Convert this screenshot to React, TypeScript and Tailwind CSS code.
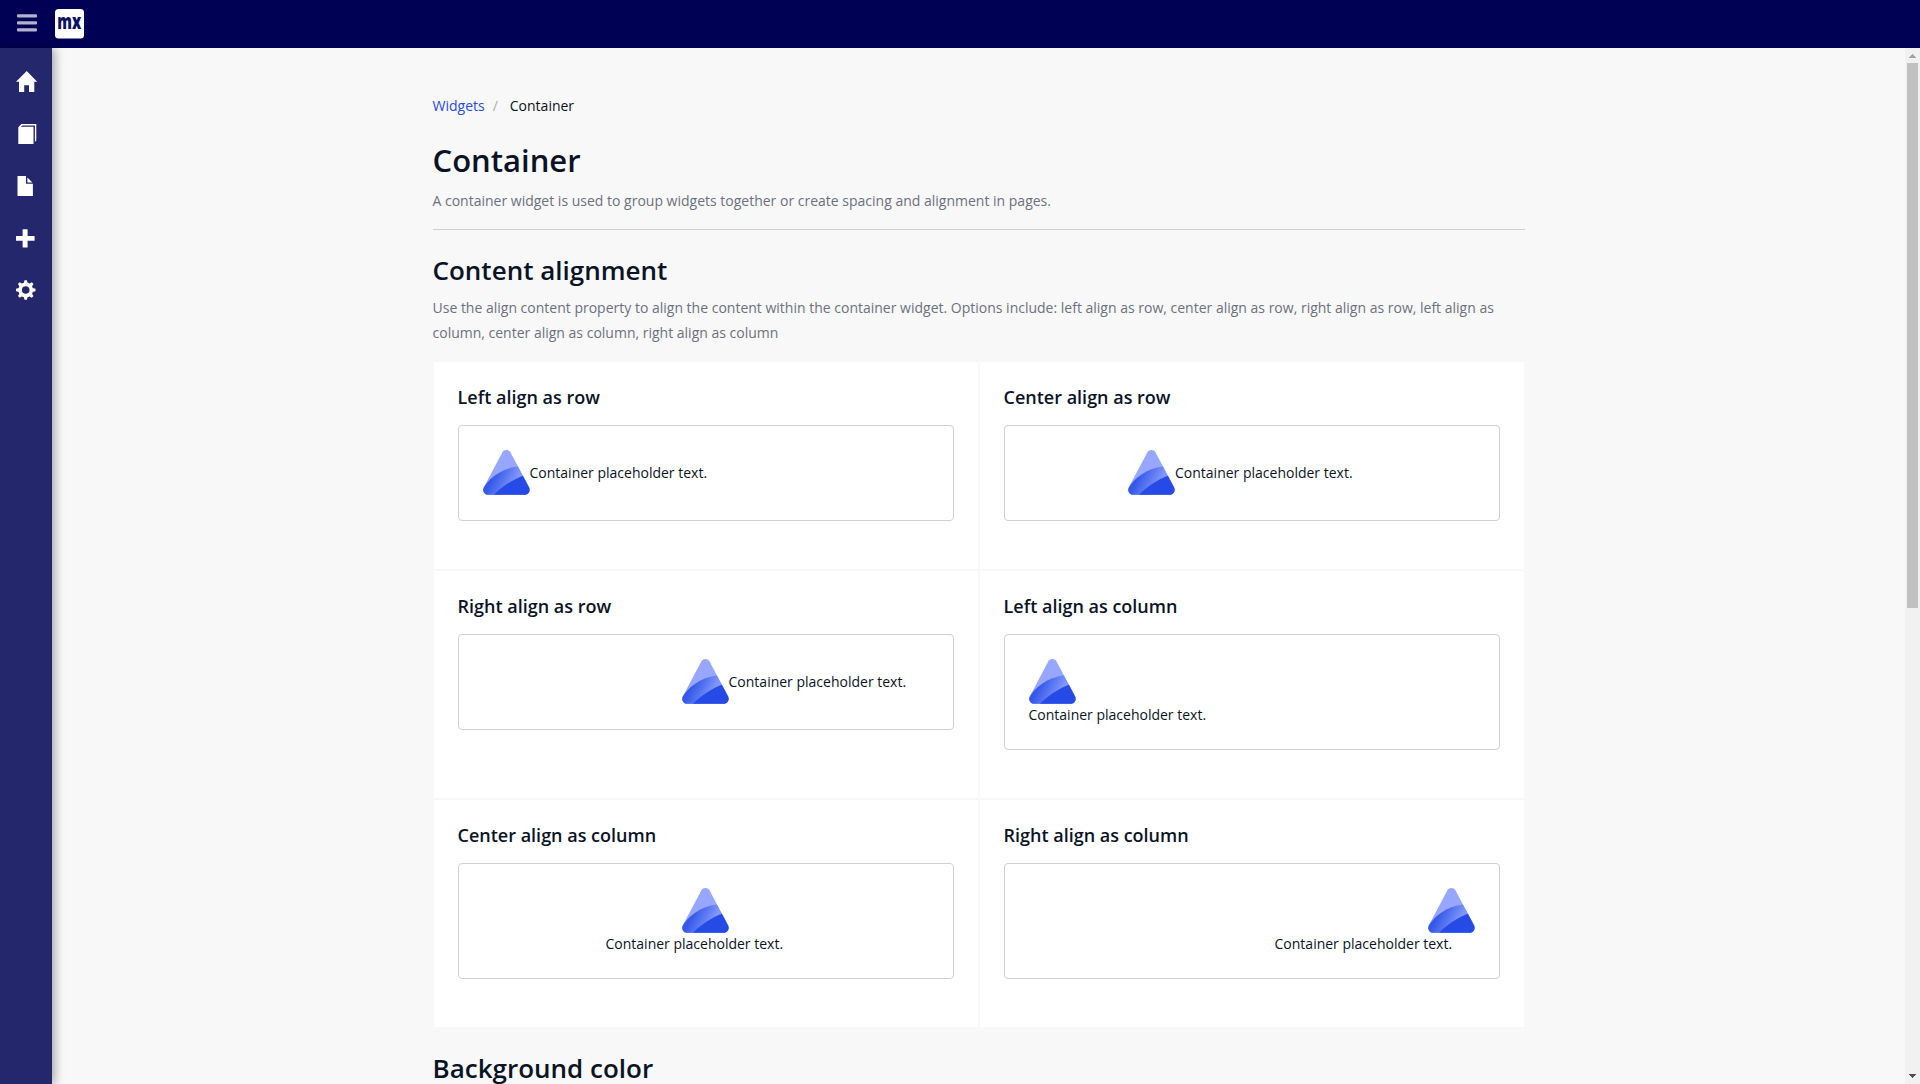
import React from "react";

type Align = "row-left" | "row-center" | "row-right" | "col-left" | "col-center" | "col-right";

const alignClasses: Record<Align, string> = {
  "row-left": "items-center justify-start",
  "row-center": "items-center justify-center",
  "row-right": "items-center justify-end",
  "col-left": "flex-col items-start",
  "col-center": "flex-col items-center",
  "col-right": "flex-col items-end",
};

const examples: { title: string; align: Align }[] = [
  { title: "Left align as row", align: "row-left" },
  { title: "Center align as row", align: "row-center" },
  { title: "Right align as row", align: "row-right" },
  { title: "Left align as column", align: "col-left" },
  { title: "Center align as column", align: "col-center" },
  { title: "Right align as column", align: "col-right" },
];

function AtlasLogo({ id }: { id: string }) {
  const clip = `clip-${id}`;
  const band = `band-${id}`;
  return (
    <svg className="block h-[46px] w-[47px] shrink-0" viewBox="0 0 47 46">
      <defs>
        <clipPath id={clip}>
          <path d="M19.4 2.2C21.2-0.6 25.6-0.6 27.4 2.2L46.1 37.4C47.6 40.9 45.6 44.8 41.7 44.8H5.2C1.3 44.8-0.8 40.9 0.7 37.4Z" />
        </clipPath>
        <linearGradient id={band} gradientUnits="userSpaceOnUse" x1="9" y1="29" x2="29" y2="39">
          <stop offset="0" stopColor="#3558E9" />
          <stop offset="0.45" stopColor="#5674F1" />
          <stop offset="1" stopColor="#8397FC" />
        </linearGradient>
      </defs>
      <g clipPath={`url(#${clip})`}>
        <rect width="47" height="46" fill="#97A6FF" />
        <path d="M-1 40C5 29.5 17 18.5 36 16.2L48 30V46H-1Z" fill={`url(#${band})`} />
        <path d="M10 46C17 38 29 29.5 42 25L50 40V46Z" fill="#264AE5" />
      </g>
    </svg>
  );
}

function HomeIcon() {
  return (
    <svg className="h-[22px] w-[22px]" viewBox="0 0 22 22" fill="#fff">
      <path d="M10.7 0L21.2 10.8H18.3V21H13V14.2H8.2V21H3V10.8H0Z" />
    </svg>
  );
}

function BookIcon() {
  return (
    <svg className="h-[20px] w-[19px]" viewBox="0 0 19 20" fill="#fff">
      <path d="M3.4 0H18.3V16.6L16.9 18V1.4H4.4L2.8 2.8H15.5V20H0.3V3.3Z" />
    </svg>
  );
}

function FileIcon() {
  return (
    <svg className="h-[20px] w-[16px]" viewBox="0 0 16 20" fill="#fff">
      <path d="M0.5 0H9V7.8H15.9V20H0.5Z" />
      <path d="M10.4 1.4L15.4 6.6H10.4Z" />
    </svg>
  );
}

function PlusIcon() {
  return (
    <svg className="h-[19px] w-[19px]" viewBox="0 0 19 19" fill="#fff">
      <path d="M6.6 0.6Q6.6 0.2 7 0.2H11.2Q11.6 0.2 11.6 0.6V7H18.2Q18.6 7 18.6 7.4V11.4Q18.6 11.8 18.2 11.8H11.6V18.2Q11.6 18.6 11.2 18.6H7Q6.6 18.6 6.6 18.2V11.8H0.4Q0 11.8 0 11.4V7.4Q0 7 0.4 7H6.6Z" />
    </svg>
  );
}

function GearIcon() {
  return (
    <svg className="h-[20px] w-[20px]" viewBox="0 0 20 20">
      <circle cx="9.7" cy="10" r="5.6" fill="none" stroke="#fff" strokeWidth="3.6" />
      <g fill="#fff">
        {[0, 45, 90, 135, 180, 225, 270, 315].map((a) => (
          <path key={a} d="M7.8 3.2L8.5 0.2H10.9L11.6 3.2Z" transform={`rotate(${a} 9.7 10)`} />
        ))}
      </g>
    </svg>
  );
}

function Header() {
  return (
    <header className="flex h-12 shrink-0 items-start bg-[#000055]">
      <svg className="mt-[14px] ml-[17px] h-[18px] w-5" viewBox="0 0 20 18" fill="#B3B3CC">
        <rect y="0.2" width="20" height="3.2" rx="1" />
        <rect y="7.3" width="20" height="3.2" rx="1" />
        <rect y="14.3" width="20" height="3.2" rx="1" />
      </svg>
      <svg className="mt-[9px] ml-[18px] h-[30px] w-[29px] overflow-visible" viewBox="0 0 29 30">
        <rect width="29" height="29.6" rx="3.5" fill="#fff" />
        <text
          x="2.3"
          y="20.3"
          fontFamily="Open Sans"
          fontWeight="800"
          fontSize="21"
          textLength="24"
          lengthAdjust="spacingAndGlyphs"
          fill="#0A1360"
        >
          mx
        </text>
      </svg>
    </header>
  );
}

function Sidebar() {
  const items = [
    { icon: <HomeIcon />, pad: "pl-4 pt-[23px]" },
    { icon: <BookIcon />, pad: "pl-[17.5px] pt-[24px]" },
    { icon: <FileIcon />, pad: "pl-[17px] pt-[24px]" },
    { icon: <PlusIcon />, pad: "pl-4 pt-[25px]" },
    { icon: <GearIcon />, pad: "pl-4 pt-[24px]" },
  ];
  return (
    <nav className="relative z-10 flex w-[52px] shrink-0 flex-col bg-[#24276C] shadow-[2px_0_10px_rgba(0,0,0,0.38)]">
      {items.map((item, i) => (
        <a key={i} className={`block h-[52px] ${item.pad}`}>
          {item.icon}
        </a>
      ))}
    </nav>
  );
}

function Scrollbar() {
  return (
    <div className="flex w-[15px] shrink-0 flex-col items-center bg-[#F1F1F1]">
      <svg className="h-[15px] w-[15px] shrink-0" viewBox="0 0 15 15" shapeRendering="crispEdges">
        <path d="M4 10L7.5 6L11 10Z" fill="#A3A3A3" />
      </svg>
      <div className="h-[545px] w-[11px] bg-[#C1C1C1]" />
      <svg className="mt-auto h-[15px] w-[15px] shrink-0" viewBox="0 0 15 15" shapeRendering="crispEdges">
        <path d="M4 5L7.5 9L11 5Z" fill="#505050" />
      </svg>
    </div>
  );
}

function ExampleCard({ title, align }: { title: string; align: Align }) {
  return (
    <div className="border border-[#F8F8F8] bg-white px-6 pt-[23px] pb-12">
      <h4 className="mb-[15px] text-[18px] leading-[25px] font-semibold">{title}</h4>
      <div className={`flex rounded-[4px] border border-[#CED0D3] p-6 ${alignClasses[align]}`}>
        <AtlasLogo id={align} />
        <span className="mr-[22.4px] text-sm leading-5">Container placeholder text.</span>
      </div>
    </div>
  );
}

export default function App() {
  return (
    <div className="flex h-[1084px] w-[1920px] flex-col overflow-hidden bg-[#F8F8F8] font-['Open_Sans',sans-serif] text-[#0A1325]">
      <Header />
      <div className="flex min-h-0 flex-1">
        <Sidebar />
        <main className="min-w-0 flex-1 overflow-hidden">
          <div className="mx-auto w-[1092px]">
            <nav className="flex pt-12 text-sm leading-5">
              <a className="text-[#264AE5]">Widgets</a>
              <span className="pr-3 pl-2 text-[#A9ACB3]">/</span>
              <span>Container</span>
            </nav>
            <h1 className="mt-[22px] text-[31px] leading-[44px] font-semibold">Container</h1>
            <p className="mt-[6px] h-[42px] border-b border-[#CED0D3] text-sm leading-[25px] text-[#6C717E]">
              A container widget is used to group widgets together or create spacing and alignment in pages.
            </p>
            <h2 className="mt-[22px] text-[26px] leading-[37px] font-semibold">Content alignment</h2>
            <p className="mt-[6px] text-sm leading-[25px] text-[#6C717E]">
              Use the align content property to align the content within the container widget. Options include: left
              align as row, center align as row, right align as row, left align as column, center align as column, right
              align as column
            </p>
            <div className="mt-4 grid grid-cols-2 items-stretch">
              {examples.map((e) => (
                <ExampleCard key={e.align} title={e.title} align={e.align} />
              ))}
            </div>
            <h2 className="mt-[22px] text-[26px] leading-[37px] font-semibold">Background color</h2>
          </div>
        </main>
        <Scrollbar />
      </div>
    </div>
  );
}
